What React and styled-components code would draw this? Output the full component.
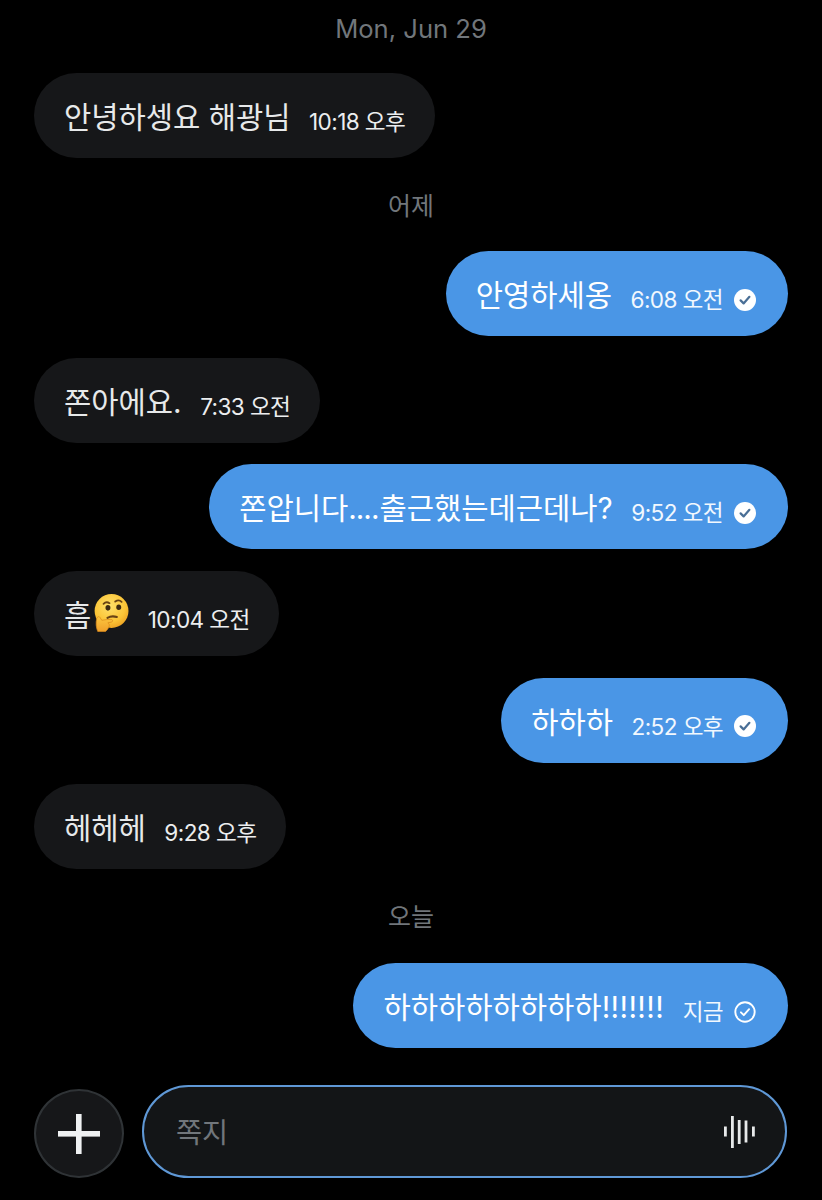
import React from "react";
import styled, { createGlobalStyle } from "styled-components";

const Global = createGlobalStyle`
  html, body { margin: 0; padding: 0; background: #000; }
  body { font-family: Inter, "Noto Sans CJK KR", "Noto Sans", sans-serif; }
`;

const Page = styled.div`
  width: 822px;
  height: 1200px;
  box-sizing: border-box;
  background: #000;
  overflow: hidden;
  display: flex;
  flex-direction: column;
`;

const Thread = styled.div`
  display: flex;
  flex-direction: column;
  gap: 21.6px;
  padding: 0 34px;
`;

const DayLabel = styled.div`
  height: ${(p) => p.$h || 50}px;
  box-sizing: border-box;
  padding-top: ${(p) => p.$top || 0}px;
  padding-bottom: ${(p) => p.$bottom || 0}px;
  display: flex;
  align-items: center;
  justify-content: center;
  color: #71767b;
  font-size: ${(p) => p.$size || 25}px;
`;

const Row = styled.div`
  display: flex;
  justify-content: ${(p) => (p.$mine ? "flex-end" : "flex-start")};
`;

const Bubble = styled.div`
  height: 85px;
  box-sizing: border-box;
  border-radius: 42.5px;
  padding: 0 ${(p) => (p.$mine ? 32 : 29.5)}px 0 30px;
  display: flex;
  align-items: center;
  background: ${(p) => (p.$mine ? "#4a96e6" : "#161719")};
  color: ${(p) => (p.$mine ? "#fff" : "#e7e9ea")};
`;

const Body = styled.span`
  font-size: 29.65px;
  line-height: 40px;
  margin-top: 3px;
  margin-right: 18.5px;
  white-space: nowrap;
  display: inline-flex;
  align-items: center;
`;

const Dots = styled.span`
  letter-spacing: -1px;
  margin-right: 1px;
`;

const Bangs = styled.span`
  letter-spacing: 0.4px;
`;

const Time = styled.span`
  font-size: 22.6px;
  letter-spacing: -0.6px;
  margin-top: 10px;
  white-space: nowrap;
  color: ${(p) => (p.$mine ? "#f2f8fe" : "#eceeef")};
`;

const Status = styled.svg`
  width: 22px;
  height: 22px;
  margin-left: 11px;
  margin-top: 12px;
  flex: none;
`;

const Composer = styled.div`
  display: flex;
  align-items: flex-end;
  gap: 18px;
  margin-top: 37px;
  padding: 0 35px 0 34px;
`;

const AddButton = styled.button`
  width: 90px;
  height: 89px;
  box-sizing: border-box;
  padding: 0;
  flex: none;
  border-radius: 50%;
  border: 2px solid #2f3336;
  background: #161719;
  display: flex;
  align-items: center;
  justify-content: center;
`;

const Field = styled.div`
  flex: 1;
  height: 93px;
  box-sizing: border-box;
  border-radius: 46.5px;
  border: 2px solid #5f98d6;
  background: #131517;
  display: flex;
  align-items: center;
  justify-content: space-between;
  padding: 0 28px 0 32px;
`;

const Placeholder = styled.span`
  color: #71767b;
  font-size: 28.4px;
  margin-top: -2px;
`;

const ThinkingFace = styled.svg`
  width: 38px;
  height: 38px;
  flex: none;
  margin-right: 0;
  margin-top: -4px;
`;

const Read = () => (
  <Status viewBox="0 0 22 22">
    <circle cx="11" cy="11" r="11" fill="#fff" />
    <path d="M6.6 11.4l3 3 5.8-6.6" fill="none" stroke="#4a6f96" strokeWidth="2.2" strokeLinecap="round" strokeLinejoin="round" />
  </Status>
);

const Sent = () => (
  <Status viewBox="0 0 22 22">
    <circle cx="11" cy="11" r="9.7" fill="none" stroke="#fff" strokeWidth="1.9" />
    <path d="M6.9 11.3l2.9 2.9 5.3-6" fill="none" stroke="#fff" strokeWidth="1.9" strokeLinecap="round" strokeLinejoin="round" />
  </Status>
);

const Thinking = () => (
  <ThinkingFace viewBox="0 0 37 37">
    <defs>
      <radialGradient id="face" cx="0.45" cy="0.35" r="0.72">
        <stop offset="0" stopColor="#ffe06a" />
        <stop offset="0.65" stopColor="#fbc436" />
        <stop offset="1" stopColor="#ea9a1e" />
      </radialGradient>
      <linearGradient id="hand" x1="0" y1="0" x2="0" y2="1">
        <stop offset="0" stopColor="#fcc63f" />
        <stop offset="1" stopColor="#f0a02a" />
      </linearGradient>
    </defs>
    <circle cx="20" cy="16.5" r="16.5" fill="url(#face)" />
    <path d="M12.2 9.6c1.7-1.8 3.9-2 5.8-.7" fill="none" stroke="#6a4314" strokeWidth="1.8" strokeLinecap="round" />
    <path d="M23.6 7.4c2.3-1.7 4.6-1.4 6.2.2" fill="none" stroke="#6a4314" strokeWidth="1.8" strokeLinecap="round" />
    <ellipse cx="16.5" cy="13.5" rx="2.4" ry="2.7" fill="#3d2a12" />
    <ellipse cx="27" cy="13" rx="2.4" ry="2.7" fill="#3d2a12" />
    <path d="M16 23.2c2.6-1.5 6-1.8 9.2-.8" fill="none" stroke="#6a4314" strokeWidth="2" strokeLinecap="round" />
    <path d="M6.6 36.6c-1.6-3.6-2.2-8.8-.9-13 .6-1.8 2.4-2 3.2-.6l1.6 2.6c2.8-.5 6.5-1 9.2-.9 1.8.1 1.8 2.5 0 2.8l-3.3.5c1.5.8 1.8 2.6 1 4.2-.8 1.8-1.8 3.2-3.3 4.4z" fill="url(#hand)" stroke="#d98a1a" strokeWidth="0.7" />
  </ThinkingFace>
);

const Wave = () => (
  <svg width="34" height="34" viewBox="0 0 34 34" fill="#e7e9ea">
    <rect x="1" y="11.5" width="2.8" height="10" />
    <rect x="8" y="1" width="2.8" height="32" />
    <rect x="14.8" y="5" width="2.8" height="24" />
    <rect x="21.6" y="5.5" width="2.8" height="22" />
    <rect x="29" y="11.5" width="2.8" height="10" />
  </svg>
);

const Plus = () => (
  <svg width="42" height="40" viewBox="0 0 42 40" fill="#eff1f2">
    <rect x="0" y="17" width="42" height="5.6" />
    <rect x="18" y="0" width="5.6" height="40" />
  </svg>
);

const Msg = ({ mine, children, time, sent }) => (
  <Row $mine={mine}>
    <Bubble $mine={mine}>
      <Body>{children}</Body>
      <Time $mine={mine}>{time}</Time>
      {mine && (sent ? <Sent /> : <Read />)}
    </Bubble>
  </Row>
);

export default function App() {
  return (
    <Page>
      <Global />
      <Thread>
        <DayLabel $h={51.4} $top={5} $size={25.6}>Mon, Jun 29</DayLabel>
        <Msg time="10:18 오후">안녕하셍요 해광님</Msg>
        <DayLabel $bottom={2} $size={25}>어제</DayLabel>
        <Msg mine time="6:08 오전">안영하세옹</Msg>
        <Msg time="7:33 오전">쫀아에요.</Msg>
        <Msg mine time="9:52 오전">쫀압니다<Dots>....</Dots>출근했는데근데나?</Msg>
        <Msg time="10:04 오전">흠<Thinking /></Msg>
        <Msg mine time="2:52 오후">하하하</Msg>
        <Msg time="9:28 오후">헤헤헤</Msg>
        <DayLabel $h={50.8} $bottom={2} $size={25}>오늘</DayLabel>
        <Msg mine time="지금" sent>하하하하하하하하<Bangs>!!!!!!!</Bangs></Msg>
      </Thread>
      <Composer>
        <AddButton aria-label="add"><Plus /></AddButton>
        <Field>
          <Placeholder>쪽지</Placeholder>
          <Wave />
        </Field>
      </Composer>
    </Page>
  );
}
